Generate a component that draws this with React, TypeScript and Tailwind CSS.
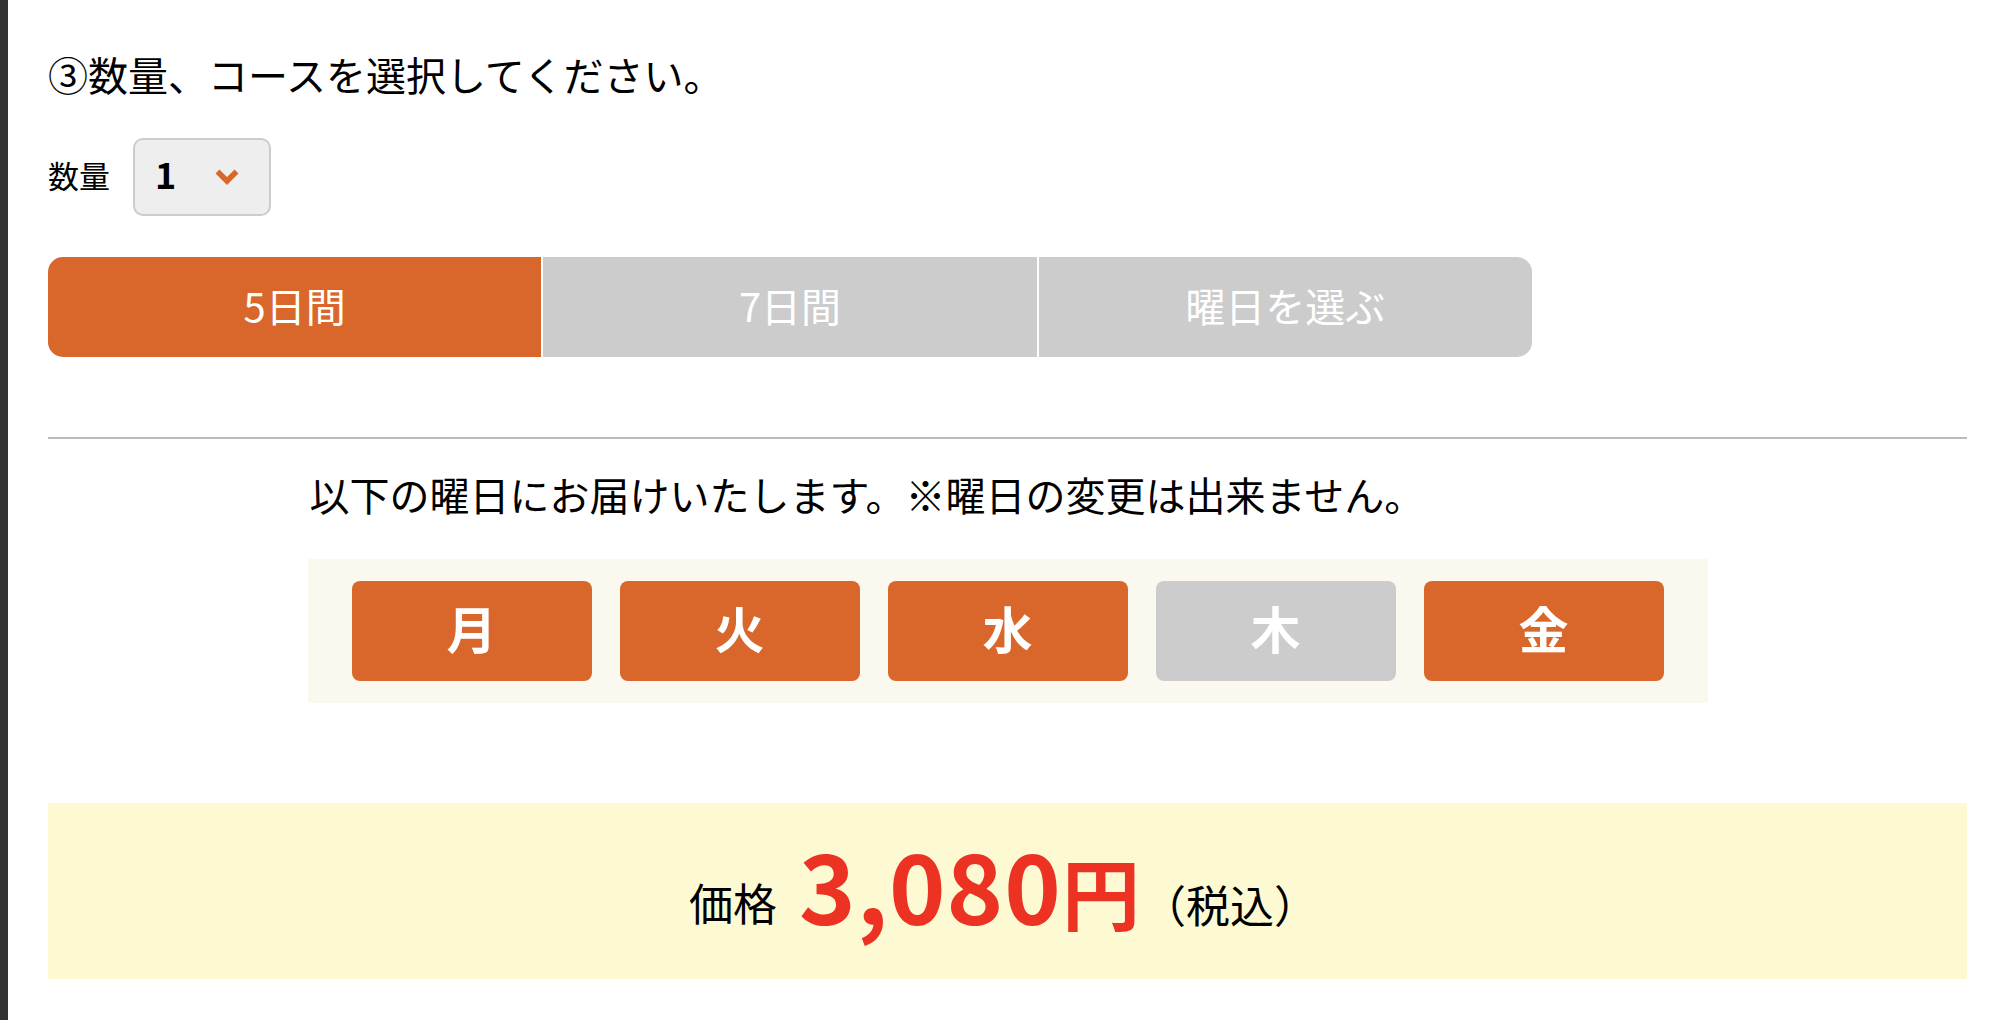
import React from "react";

const days = [
  { label: "月", on: true },
  { label: "火", on: true },
  { label: "水", on: true },
  { label: "木", on: false },
  { label: "金", on: true },
];

export default function App() {
  return (
    <div className="flex h-[1020px] w-[1998px] bg-white font-['Noto_Sans_CJK_JP','Noto_Sans',sans-serif] text-black">
      <div className="w-[8px] shrink-0 bg-[#333333]" />
      <div className="flex flex-1 flex-col pl-[40px] pr-[31px] pt-[54px]">
        <h2 className="text-[40px] font-normal leading-[40px]">③数量、コースを選択してください。</h2>

        <div className="mt-[44px] flex items-center">
          <span className="w-[62px] pb-[6px] text-[31px] leading-[31px]">数量</span>
          <div className="ml-[23px] flex h-[78px] w-[138px] items-center rounded-[10px] border-2 border-[#cccccc] bg-[#eeeeee] pl-[20px]">
            <span className="mb-[8px] text-[36px] font-bold leading-none">1</span>
            <svg className="ml-[38px]" width="26" height="18" viewBox="0 0 26 18" fill="none">
              <polyline points="3.5,3.5 13,13 22.5,3.5" stroke="#d9672b" strokeWidth="5.5" strokeLinecap="butt" strokeLinejoin="miter" />
            </svg>
          </div>
        </div>

        <div className="mt-[41px] flex h-[100px] w-[1484px] gap-[2px] overflow-hidden rounded-[15px] bg-white">
          <button className="flex flex-1 items-center justify-center bg-[#d9672b] pb-[5px] text-[40px] leading-none text-white">5日間</button>
          <button className="flex flex-1 items-center justify-center bg-[#cccccc] pb-[5px] text-[40px] leading-none text-white">7日間</button>
          <button className="flex flex-1 items-center justify-center bg-[#cccccc] pb-[5px] text-[40px] leading-none text-white">曜日を選ぶ</button>
        </div>

        <div className="mt-[80px] h-[2px] w-full bg-[#bbbbbb]" />

        <div className="mx-auto w-[1400px]">
          <p className="mt-[35px] pl-[2px] text-[40px] leading-[40px]">以下の曜日にお届けいたします。※曜日の変更は出来ません。</p>
          <div className="mt-[45px] flex gap-[28px] bg-[#fbf9ef] px-[44px] py-[22px]">
            {days.map((d) => (
              <div
                key={d.label}
                className={
                  d.on
                    ? "flex h-[100px] w-[240px] items-center justify-center rounded-[8px] bg-[#d9672b] pb-[8px] text-[50px] font-bold leading-none text-white"
                    : "flex h-[100px] w-[240px] items-center justify-center rounded-[8px] bg-[#cccccc] pb-[8px] text-[50px] font-bold leading-none text-white"
                }
              >
                {d.label}
              </div>
            ))}
          </div>
        </div>

        <div className="mt-[100px] flex h-[176px] w-full items-center justify-center bg-[#fdf9d3] pb-[15px] pr-[8px]">
          <div className="flex items-baseline">
            <span className="relative top-[-4px] text-[44px] leading-none">価格</span>
            <span className="ml-[22px] text-[96px] font-bold leading-none tracking-[1px] text-[#eb3223]">3,080</span>
            <span className="text-[78px] font-bold leading-none text-[#eb3223]">円</span>
            <span className="relative top-[-2px] ml-[2px] text-[44px] leading-none">（税込）</span>
          </div>
        </div>
      </div>
    </div>
  );
}
